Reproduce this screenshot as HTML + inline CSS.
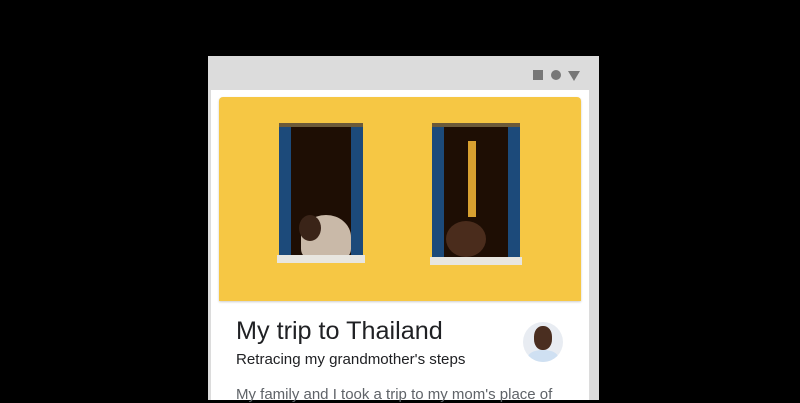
<!DOCTYPE html>
<html><head><style>
body{margin:0;width:800px;height:400px;background:#000;overflow:hidden;position:relative;font-family:"Liberation Sans",sans-serif}
.frame{position:absolute;left:208px;top:56px;width:391px;height:344px;background:#dcdcdc}
.inner{position:absolute;left:3px;top:34px;width:378px;height:310px;background:#fff}
.img{position:absolute;left:219px;top:97px;width:362px;height:204px;background:#f6c744;border-radius:4px 4px 0 0;overflow:hidden;box-shadow:0 1px 2px rgba(0,0,0,.2)}
.win{position:absolute;background:#1e0e04;border-top:4px solid #6b5a3a}
.sh{position:absolute;top:0;bottom:8px;width:12px;background:#1c4a7a}
.sill{position:absolute;left:-2px;right:-2px;bottom:0;height:8px;background:#e8e6e0}
.person{position:absolute;border-radius:50% 50% 10px 10px}
</style></head><body>
<div class="frame"><div class="inner"></div>
<div style="position:absolute;left:325px;top:14px;width:10px;height:10px;background:#777"></div>
<div style="position:absolute;left:343px;top:14px;width:10px;height:10px;border-radius:50%;background:#777"></div>
<div style="position:absolute;left:360px;top:15px;width:0;height:0;border-left:6px solid transparent;border-right:6px solid transparent;border-top:10px solid #777"></div>
</div>
<div class="img">
 <div class="win" style="left:60px;top:26px;width:84px;height:136px">
  <div class="sh" style="left:0"></div><div class="sh" style="right:0"></div>
  <div class="person" style="left:22px;top:88px;width:50px;height:44px;background:#c9b9a8"></div>
  <div class="person" style="left:20px;top:88px;width:22px;height:26px;background:#3a2418;border-radius:50%"></div>
  <div class="sill"></div></div>
 <div class="win" style="left:213px;top:26px;width:88px;height:138px">
  <div class="sh" style="left:0"></div><div class="sh" style="right:0"></div>
  <div style="position:absolute;left:36px;top:14px;width:8px;height:76px;background:#d8a030"></div>
  <div class="person" style="left:14px;top:94px;width:40px;height:36px;background:#4a2c1c;border-radius:50%"></div>
  <div class="sill"></div></div>
</div>
<div style="position:absolute;left:236px;top:317px;font-size:25.2px;color:#202124">My trip to Thailand</div>
<div style="position:absolute;left:236px;top:351px;font-size:15.1px;color:#202124">Retracing my grandmother's steps</div>
<div style="position:absolute;left:236px;top:386px;font-size:15px;color:#5f6368;white-space:nowrap">My family and I took a trip to my mom's place of</div>
<div style="position:absolute;left:523px;top:322px;width:40px;height:40px;border-radius:50%;background:#e8ecf2;overflow:hidden">
 <div style="position:absolute;left:11px;top:4px;width:18px;height:24px;border-radius:45%;background:#4a2e20"></div>
 <div style="position:absolute;left:5px;top:28px;width:30px;height:14px;border-radius:50% 50% 0 0;background:#cfe0f2"></div>
</div>
</body></html>
